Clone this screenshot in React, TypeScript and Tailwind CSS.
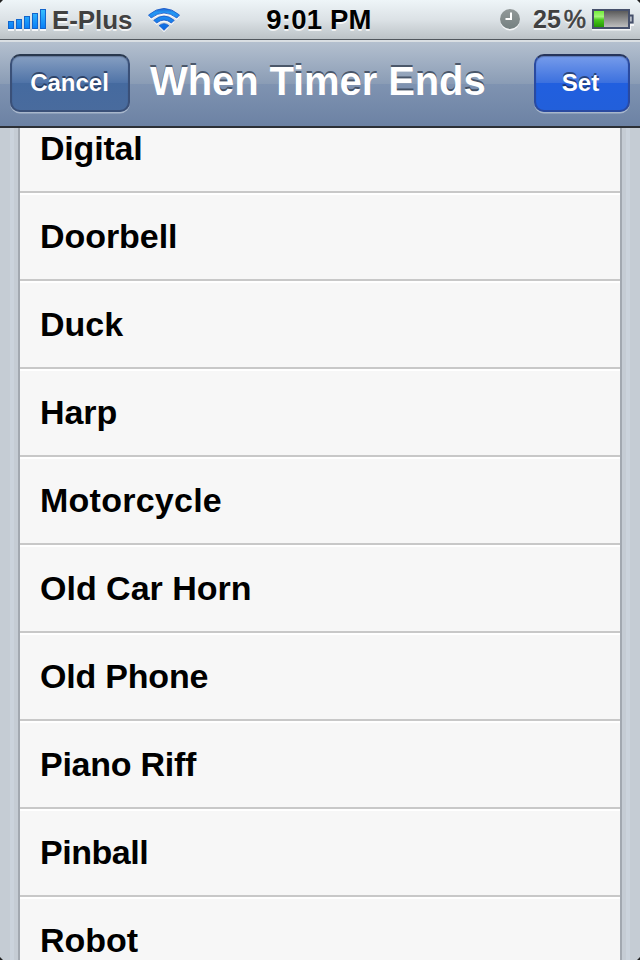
import React from "react";

const sounds: { name: string; spacing: string }[] = [
  { name: "Digital", spacing: "tracking-[-0.2px]" },
  { name: "Doorbell", spacing: "tracking-[-0.05px]" },
  { name: "Duck", spacing: "tracking-[0px]" },
  { name: "Harp", spacing: "tracking-[-0.1px]" },
  { name: "Motorcycle", spacing: "tracking-[0.25px]" },
  { name: "Old Car Horn", spacing: "tracking-[0px]" },
  { name: "Old Phone", spacing: "tracking-[-0.2px]" },
  { name: "Piano Riff", spacing: "tracking-[-0.25px]" },
  { name: "Pinball", spacing: "tracking-[-0.45px]" },
  { name: "Robot", spacing: "tracking-[0px]" },
];

function SignalBars() {
  const bars = [
    [8, 21],
    [16, 19],
    [24, 16],
    [32, 13],
    [40, 9],
  ];
  return (
    <svg width="48" height="39" className="shrink-0">
      <defs>
        <linearGradient id="bar" x1="0" y1="9" x2="0" y2="29" gradientUnits="userSpaceOnUse">
          <stop offset="0" stopColor="#38c2ff" />
          <stop offset="1" stopColor="#087cf5" />
        </linearGradient>
      </defs>
      {bars.map(([x, y]) => (
        <g key={x}>
          <rect x={x} y={y + 2} width="6" height={29 - y} fill="#fff" opacity="0.8" />
          <rect x={x + 0.5} y={y + 0.5} width="5" height={28 - y} fill="url(#bar)" stroke="#1265cc" />
        </g>
      ))}
    </svg>
  );
}

function WifiShapes() {
  return (
    <>
      <path d="M148.5 15Q164 1.8 179.5 15L176.8 18Q164 8 151.2 18Z" />
      <path d="M153.8 20.3Q164 11.8 174.2 20.3L171.4 23.1Q164 17 156.6 23.1Z" />
      <path d="M159.2 25.6Q164 21.8 168.8 25.6L164 30.3Z" />
    </>
  );
}

function Wifi() {
  return (
    <svg width="36" height="39" viewBox="146 0 36 39" className="ml-[14px] shrink-0">
      <defs>
        <linearGradient id="wifi" x1="0" y1="8" x2="0" y2="31" gradientUnits="userSpaceOnUse">
          <stop offset="0" stopColor="#1f62d2" />
          <stop offset="0.2" stopColor="#2498f4" />
          <stop offset="1" stopColor="#0860de" />
        </linearGradient>
      </defs>
      <g fill="#fff" opacity="0.85" transform="translate(0 2)">
        <WifiShapes />
      </g>
      <g fill="url(#wifi)" stroke="#1556c6" strokeWidth="0.8">
        <WifiShapes />
      </g>
    </svg>
  );
}

function Clock() {
  return (
    <svg width="22" height="39" viewBox="499 0 22 39" className="shrink-0">
      <defs>
        <linearGradient id="clock" x1="0" y1="0" x2="0" y2="1">
          <stop offset="0" stopColor="#929999" />
          <stop offset="1" stopColor="#758080" />
        </linearGradient>
      </defs>
      <circle cx="510" cy="20.5" r="10" fill="#fff" opacity="0.8" />
      <circle cx="510" cy="19" r="10" fill="url(#clock)" />
      <path d="M511 12.5V19H505.5" fill="none" stroke="#fff" strokeWidth="2" />
    </svg>
  );
}

function Battery() {
  return (
    <svg width="44" height="39" viewBox="591 0 44 39" className="shrink-0">
      <defs>
        <linearGradient id="empty" x1="0" y1="0" x2="0" y2="1">
          <stop offset="0" stopColor="#555" />
          <stop offset="0.3" stopColor="#777" />
          <stop offset="1" stopColor="#c4c4c4" />
        </linearGradient>
        <linearGradient id="charge" x1="0" y1="0" x2="0" y2="1">
          <stop offset="0" stopColor="#71ed38" />
          <stop offset="0.35" stopColor="#a4f578" />
          <stop offset="0.55" stopColor="#49c91c" />
          <stop offset="1" stopColor="#259704" />
        </linearGradient>
      </defs>
      <path d="M592 29.5H630V25H634" stroke="#fff" strokeWidth="2" fill="none" opacity="0.8" />
      <rect x="593" y="10" width="36" height="18" fill="url(#empty)" stroke="#46506b" strokeWidth="2" />
      <rect x="594" y="11" width="10" height="16" fill="url(#charge)" />
      <path d="M630 15.5H632.7V22.5H630" fill="#b7bdc7" stroke="#46506b" strokeWidth="1.8" />
    </svg>
  );
}

const buttonBase =
  "flex h-[58px] shrink-0 items-center justify-center rounded-[10px] border-2 text-[24px] leading-none font-bold text-white [text-shadow:0_-2px_0_rgba(20,35,65,.65)] shadow-[0_1.5px_0_rgba(205,215,228,.6),inset_0_1px_1px_rgba(20,30,60,.3)]";

export default function App() {
  return (
    <div className="relative flex h-[960px] w-[640px] flex-col overflow-hidden bg-[#c5ccd4] font-['Liberation_Sans',Arial,sans-serif]">
      <header className="h-[40px] shrink-0 border-b border-[#52585e] bg-linear-to-b from-[#eef5f8] via-[#dce2e6] to-[#bcc3c7]">
        <div className="grid h-[39px] grid-cols-[1fr_auto_1fr] items-start [text-shadow:0_2px_0_rgba(255,255,255,.75)]">
          <div className="flex items-start">
            <SignalBars />
            <span className="ml-[4px] h-[39px] w-[80px] text-[26px] leading-[41px] font-bold tracking-[-0.1px] whitespace-nowrap text-[#414141]">E-Plus</span>
            <Wifi />
          </div>
          <span className="h-[39px] pr-[2px] text-[27.5px] leading-[39px] font-bold tracking-[0.2px] text-black">9:01 PM</span>
          <div className="flex items-start justify-end pr-[5px]">
            <Clock />
            <span className="ml-[12px] flex w-[58px] text-[25px] leading-[39px] font-bold whitespace-nowrap text-[#414141]">
              25<span className="ml-[3px] font-normal [-webkit-text-stroke:0.6px_#414141]">%</span>
            </span>
            <Battery />
          </div>
        </div>
      </header>

      <nav className="flex h-[88px] shrink-0 items-center border-t-2 border-b-2 border-t-[#dadfe3] border-b-[#2c3036] bg-[linear-gradient(#b4c0cf_0%,#8a9cb5_50%,#7f93b1_50%,#6c82a4_100%)] px-[10px] pb-[2px]">
        <button className={`${buttonBase} w-[120px] pr-[1px] border-[#3a5078] border-t-[#29384e] bg-[linear-gradient(#8aa2c4_0%,#4f73a7_50%,#456a9f_50%,#496b9d_100%)] bg-origin-border`}>
          Cancel
        </button>
        <h1 className="ml-[20px] flex-1 pb-[4px] text-[40px] leading-none font-bold tracking-[-0.1px] whitespace-nowrap text-white [text-shadow:0_-2px_0_rgba(48,60,78,.75)]">
          When Timer Ends
        </h1>
        <button className={`${buttonBase} w-[96px] pr-[3px] border-[#2a4aa0] border-t-[#27355b] bg-[linear-gradient(#7b9fec_0%,#3b70de_50%,#215fdf_50%,#225fda_100%)] bg-origin-border`}>
          Set
        </button>
      </nav>

      <main className="flex min-h-0 flex-1 overflow-hidden bg-[linear-gradient(90deg,#c5ccd4_0_10px,#cbd3dc_10px_14px,#c5ccd4_14px_626px,#cbd3dc_626px_630px,#c5ccd4_630px)] px-[18px]">
        <ul className="-mt-[23px] h-[880px] w-full border-x-2 border-[#a2a8b0] bg-[#f7f7f7]">
          {sounds.map(({ name, spacing }) => (
            <li key={name} className="flex h-[88px] items-center border-t-2 border-b-2 border-t-white border-b-[#c8c8c8] pb-[2px] pl-[20px]">
              <span className={`text-[34px] leading-none font-bold text-black ${spacing}`}>{name}</span>
            </li>
          ))}
        </ul>
      </main>
      <svg width="640" height="960" className="pointer-events-none absolute inset-0">
        <path d="M0 0H3L0 3ZM640 0H637L640 3ZM0 957V960H3ZM640 957V960H637Z" fill="#222" />
      </svg>
    </div>
  );
}
